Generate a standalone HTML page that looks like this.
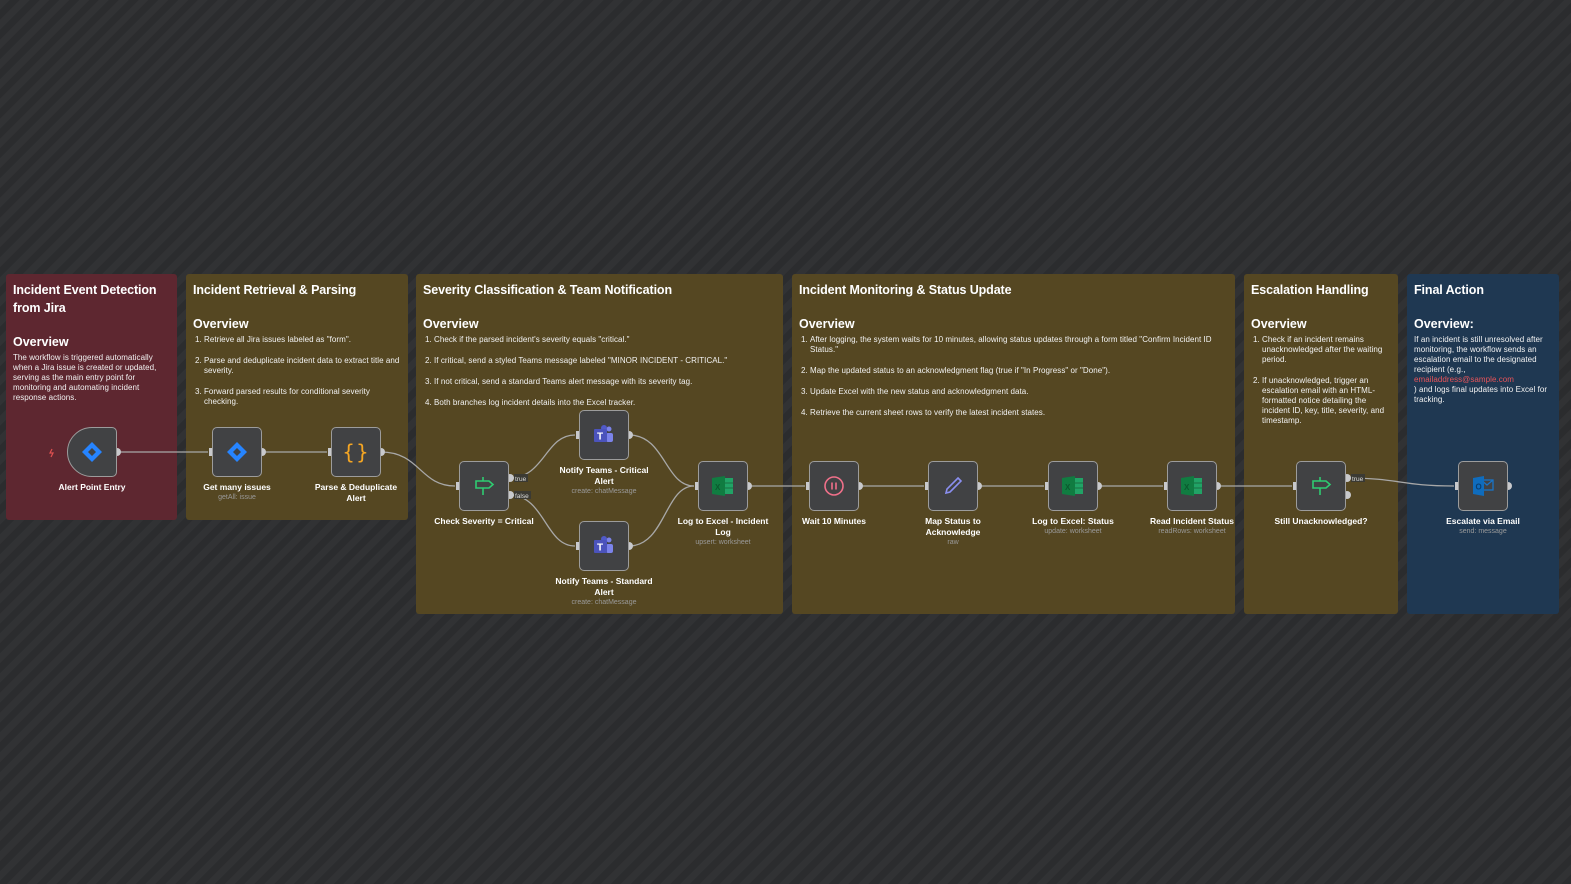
<!DOCTYPE html>
<html><head><meta charset="utf-8">
<style>
*{margin:0;padding:0;box-sizing:border-box}
body{width:1571px;height:884px;overflow:hidden;position:relative;font-family:"Liberation Sans",sans-serif;
background:repeating-linear-gradient(-45deg,#2b2c2e 0 7px,#313234 7px 14px);}
.st{position:absolute;border-radius:3px;color:#fff;padding:7px 7px}
.red{background:#5e2730}.ol{background:#554722}.nv{background:#1f3852}
.st h1{font-size:12.5px;font-weight:bold;line-height:18px;letter-spacing:-0.1px}
.st h2{font-size:12.5px;font-weight:bold;line-height:16px;margin-top:17px;margin-bottom:3px}
.st p,.st li{font-size:8px;line-height:10px;color:#f2f2f2;letter-spacing:0.05px}
.st ol{padding-left:11px}
.st li{margin-bottom:11px;padding-left:0}
.node{position:absolute;width:50px;height:50px;background:#414244;border:1.5px solid #9c9c9c;border-radius:5px;display:flex;align-items:center;justify-content:center}
.lb{position:absolute;width:104px;text-align:center;font-size:8.5px;font-weight:bold;color:#fff;line-height:11px}
.lb span{display:block;font-weight:normal;color:#9a9a9a;font-size:7px;line-height:10px}
svg.c{position:absolute;left:0;top:0}
</style></head><body>

<div class="st red" style="left:6px;top:274px;width:171px;height:246px">
<h1>Incident Event Detection from Jira</h1>
<h2>Overview</h2>
<p>The workflow is triggered automatically when a Jira issue is created or updated, serving as the main entry point for monitoring and automating incident response actions.</p>
</div>
<div class="st ol" style="left:186px;top:274px;width:222px;height:246px">
<h1>Incident Retrieval &amp; Parsing</h1>
<h2>Overview</h2>
<ol><li>Retrieve all Jira issues labeled as "form".</li><li>Parse and deduplicate incident data to extract title and severity.</li><li>Forward parsed results for conditional severity checking.</li></ol>
</div>
<div class="st ol" style="left:416px;top:274px;width:367px;height:340px">
<h1>Severity Classification &amp; Team Notification</h1>
<h2>Overview</h2>
<ol><li>Check if the parsed incident's severity equals "critical."</li><li>If critical, send a styled Teams message labeled "MINOR INCIDENT - CRITICAL."</li><li>If not critical, send a standard Teams alert message with its severity tag.</li><li>Both branches log incident details into the Excel tracker.</li></ol>
</div>
<div class="st ol" style="left:792px;top:274px;width:443px;height:340px">
<h1>Incident Monitoring &amp; Status Update</h1>
<h2>Overview</h2>
<ol><li>After logging, the system waits for 10 minutes, allowing status updates through a form titled "Confirm Incident ID Status."</li><li>Map the updated status to an acknowledgment flag (true if "In Progress" or "Done").</li><li>Update Excel with the new status and acknowledgment data.</li><li>Retrieve the current sheet rows to verify the latest incident states.</li></ol>
</div>
<div class="st ol" style="left:1244px;top:274px;width:154px;height:340px">
<h1>Escalation Handling</h1>
<h2>Overview</h2>
<ol><li>Check if an incident remains unacknowledged after the waiting period.</li><li>If unacknowledged, trigger an escalation email with an HTML-formatted notice detailing the incident ID, key, title, severity, and timestamp.</li></ol>
</div>
<div class="st nv" style="left:1407px;top:274px;width:152px;height:340px">
<h1>Final Action</h1>
<h2>Overview:</h2>
<p>If an incident is still unresolved after monitoring, the workflow sends an escalation email to the designated recipient (e.g., <span style="color:#e8545a">emailaddress@sample.com</span><br>) and logs final updates into Excel for tracking.</p>
</div>

<svg class="c" width="1571" height="884" fill="none" stroke="#a8a8a8" stroke-width="1.3">
<path d="M117 452H208"/><path d="M262 452H327"/>
<path d="M381 452C420 452 420 486 455 486"/>
<path d="M509 478C545 478 545 435 575 435"/>
<path d="M509 495C545 495 545 546 575 546"/>
<path d="M629 435C665 435 665 486 694 486"/>
<path d="M629 546C665 546 665 486 694 486"/>
<path d="M748 486H805"/><path d="M859 486H924"/><path d="M978 486H1044"/><path d="M1098 486H1163"/><path d="M1217 486H1292"/>
<path d="M1346 478C1400 478 1400 486 1454 486"/>
<g fill="#c8c9cc" stroke="none">
<circle cx="117" cy="452" r="4"/><circle cx="262" cy="452" r="4"/><circle cx="381" cy="452" r="4"/>
<circle cx="510" cy="478" r="4"/><circle cx="510" cy="495" r="4"/>
<circle cx="629" cy="435" r="4"/><circle cx="629" cy="546" r="4"/><circle cx="748" cy="486" r="4"/>
<circle cx="859" cy="486" r="4"/><circle cx="978" cy="486" r="4"/><circle cx="1098" cy="486" r="4"/><circle cx="1217" cy="486" r="4"/>
<circle cx="1347" cy="478" r="4"/><circle cx="1347" cy="495" r="4"/><circle cx="1508" cy="486" r="4"/>
<rect x="209" y="448" width="4" height="8"/><rect x="328" y="448" width="4" height="8"/><rect x="456" y="482" width="4" height="8"/>
<rect x="576" y="431" width="4" height="8"/><rect x="576" y="542" width="4" height="8"/><rect x="695" y="482" width="4" height="8"/>
<rect x="806" y="482" width="4" height="8"/><rect x="925" y="482" width="4" height="8"/><rect x="1045" y="482" width="4" height="8"/>
<rect x="1164" y="482" width="4" height="8"/><rect x="1293" y="482" width="4" height="8"/><rect x="1455" y="482" width="4" height="8"/>
</g>
<g font-family="Liberation Sans" font-size="6.5" fill="#ddd" stroke="none">
<rect x="514" y="474" width="14" height="8" fill="#3b3a33"/><text x="515" y="481">true</text>
<rect x="514" y="491" width="17" height="8" fill="#3b3a33"/><text x="515" y="498">false</text>
<rect x="1351" y="474" width="14" height="8" fill="#3b3a33"/><text x="1352" y="481">true</text>
</g>
<path d="M52 449l-2 4h3l-2 4" stroke="#e05050" stroke-width="1.2"/>
</svg>

<div class="node" style="left:67px;top:427px;border-radius:25px 5px 5px 25px"><svg width="22" height="22" viewBox="0 0 22 22"><path d="M11 1L21 11L11 21L1 11Z" fill="#2684ff"/><path d="M11 7L15 11L11 15L7 11Z" fill="#414244"/></svg></div>
<div class="lb" style="left:40px;top:482px">Alert Point Entry</div>

<div class="node" style="left:212px;top:427px"><svg width="22" height="22" viewBox="0 0 22 22"><path d="M11 1L21 11L11 21L1 11Z" fill="#2684ff"/><path d="M11 7L15 11L11 15L7 11Z" fill="#414244"/></svg></div>
<div class="lb" style="left:185px;top:482px">Get many issues<span>getAll: issue</span></div>

<div class="node" style="left:331px;top:427px"><span style="color:#f5a623;font-size:20px;font-family:'DejaVu Sans';letter-spacing:1px">{}</span></div>
<div class="lb" style="left:310px;top:482px;width:92px">Parse &amp; Deduplicate Alert</div>

<div class="node" style="left:459px;top:461px"><svg width="22" height="22" viewBox="0 0 22 22" fill="none" stroke="#2ecc71" stroke-width="1.6"><path d="M3 6H16L20 9.5L16 13H3Z"/><path d="M10 2V6M10 13V20"/></svg></div>
<div class="lb" style="left:428px;top:516px;width:112px">Check Severity = Critical</div>

<div class="node" style="left:579px;top:410px"><svg width="24" height="22" viewBox="0 0 24 22"><circle cx="17" cy="5" r="2.5" fill="#7b83eb"/><rect x="14" y="9" width="7" height="9" rx="2" fill="#7b83eb"/><circle cx="12" cy="4" r="3" fill="#5059c9"/><rect x="2" y="5" width="13" height="13" rx="1" fill="#4b53bc"/><text x="5" y="15.5" font-family="Liberation Sans" font-weight="bold" font-size="10" fill="#fff">T</text></svg></div>
<div class="lb" style="left:552px;top:465px">Notify Teams - Critical Alert<span>create: chatMessage</span></div>

<div class="node" style="left:579px;top:521px"><svg width="24" height="22" viewBox="0 0 24 22"><circle cx="17" cy="5" r="2.5" fill="#7b83eb"/><rect x="14" y="9" width="7" height="9" rx="2" fill="#7b83eb"/><circle cx="12" cy="4" r="3" fill="#5059c9"/><rect x="2" y="5" width="13" height="13" rx="1" fill="#4b53bc"/><text x="5" y="15.5" font-family="Liberation Sans" font-weight="bold" font-size="10" fill="#fff">T</text></svg></div>
<div class="lb" style="left:552px;top:576px">Notify Teams - Standard Alert<span>create: chatMessage</span></div>

<div class="node" style="left:698px;top:461px"><svg width="24" height="22" viewBox="0 0 24 22"><rect x="9" y="3" width="13" height="16" fill="#21a366"/><path d="M12 3V19M9 8H22M9 13H22" stroke="#185c37" stroke-width=".8"/><path d="M1 3L14 1V21L1 19Z" fill="#107c41"/><text x="4" y="15" font-family="Liberation Sans" font-weight="bold" font-size="8" fill="#0b5a2e">X</text></svg></div>
<div class="lb" style="left:671px;top:516px">Log to Excel - Incident Log<span>upsert: worksheet</span></div>

<div class="node" style="left:809px;top:461px"><svg width="22" height="22" viewBox="0 0 22 22" fill="none" stroke="#f0708a" stroke-width="1.6"><circle cx="11" cy="11" r="9"/><path d="M9 7.5V14.5M13 7.5V14.5"/></svg></div>
<div class="lb" style="left:782px;top:516px">Wait 10 Minutes</div>

<div class="node" style="left:928px;top:461px"><svg width="22" height="22" viewBox="0 0 22 22" fill="none" stroke="#8a8ff0" stroke-width="1.6"><path d="M16 3L19 6L8 17L4 18L5 14Z"/></svg></div>
<div class="lb" style="left:901px;top:516px;width:104px">Map Status to Acknowledge<span>raw</span></div>

<div class="node" style="left:1048px;top:461px"><svg width="24" height="22" viewBox="0 0 24 22"><rect x="9" y="3" width="13" height="16" fill="#21a366"/><path d="M12 3V19M9 8H22M9 13H22" stroke="#185c37" stroke-width=".8"/><path d="M1 3L14 1V21L1 19Z" fill="#107c41"/><text x="4" y="15" font-family="Liberation Sans" font-weight="bold" font-size="8" fill="#0b5a2e">X</text></svg></div>
<div class="lb" style="left:1021px;top:516px">Log to Excel: Status<span>update: worksheet</span></div>

<div class="node" style="left:1167px;top:461px"><svg width="24" height="22" viewBox="0 0 24 22"><rect x="9" y="3" width="13" height="16" fill="#21a366"/><path d="M12 3V19M9 8H22M9 13H22" stroke="#185c37" stroke-width=".8"/><path d="M1 3L14 1V21L1 19Z" fill="#107c41"/><text x="4" y="15" font-family="Liberation Sans" font-weight="bold" font-size="8" fill="#0b5a2e">X</text></svg></div>
<div class="lb" style="left:1140px;top:516px">Read Incident Status<span>readRows: worksheet</span></div>

<div class="node" style="left:1296px;top:461px"><svg width="22" height="22" viewBox="0 0 22 22" fill="none" stroke="#2ecc71" stroke-width="1.6"><path d="M3 6H16L20 9.5L16 13H3Z"/><path d="M10 2V6M10 13V20"/></svg></div>
<div class="lb" style="left:1264px;top:516px;width:114px">Still Unacknowledged?</div>

<div class="node" style="left:1458px;top:461px"><svg width="24" height="22" viewBox="0 0 24 22"><rect x="10" y="5" width="12" height="10" fill="none" stroke="#1a73c7" stroke-width="1.3"/><path d="M10 5L16 10L22 5" fill="none" stroke="#1a73c7" stroke-width="1.3"/><path d="M2 3L13 1V21L2 19Z" fill="#0f6cbd"/><text x="4.5" y="14.5" font-family="Liberation Sans" font-weight="bold" font-size="8" fill="#0a3e70">O</text></svg></div>
<div class="lb" style="left:1431px;top:516px">Escalate via Email<span>send: message</span></div>

</body></html>
